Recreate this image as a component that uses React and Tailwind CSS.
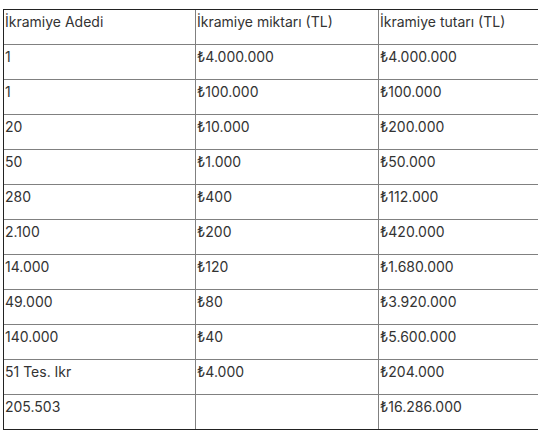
const rows = [
  ["İkramiye Adedi", "İkramiye miktarı (TL)", "İkramiye tutarı (TL)"],
  ["1", "₺4.000.000", "₺4.000.000"],
  ["1", "₺100.000", "₺100.000"],
  ["20", "₺10.000", "₺200.000"],
  ["50", "₺1.000", "₺50.000"],
  ["280", "₺400", "₺112.000"],
  ["2.100", "₺200", "₺420.000"],
  ["14.000", "₺120", "₺1.680.000"],
  ["49.000", "₺80", "₺3.920.000"],
  ["140.000", "₺40", "₺5.600.000"],
  ["51 Tes. Ikr", "₺4.000", "₺204.000"],
  ["205.503", "", "₺16.286.000"],
];

export default function App() {
  return (
    <div className="w-[538px] h-[438px] overflow-hidden bg-white pl-[3px] pt-[9px] font-['Inter',sans-serif] text-[14px] text-[#333]">
      <div className="w-[600px] border border-[#222]">
        {rows.map((row, i) => (
          <div
            key={i}
            className={`grid grid-cols-[192px_183px_1fr] ${i === rows.length - 1 ? "h-[34px]" : "h-[35px] border-b border-[#808080]"}`}
          >
            {row.map((cell, j) => (
              <div
                key={j}
                className={`pl-[1px] pt-[2px] leading-5 ${j < 2 ? "border-r border-[#808080]" : ""}`}
              >
                {cell}
              </div>
            ))}
          </div>
        ))}
      </div>
    </div>
  );
}
